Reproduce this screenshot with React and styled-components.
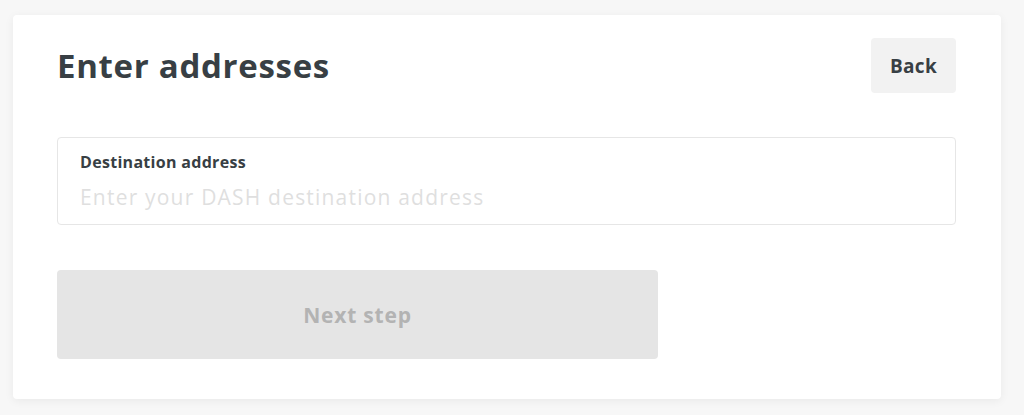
import React from "react";
import styled, { createGlobalStyle } from "styled-components";

const GlobalStyle = createGlobalStyle`
  html, body {
    margin: 0;
    padding: 0;
    background: #f7f7f7;
    font-family: "Open Sans", "Liberation Sans", sans-serif;
  }
`;

const Page = styled.div`
  padding: 15px 23px 16px 13px;
`;

const Card = styled.section`
  background: #fff;
  border-radius: 4px;
  box-shadow: 0 2px 10px rgba(0, 0, 0, 0.06);
  padding: 23px 45px 40px 44px;
`;

const Header = styled.div`
  display: flex;
  align-items: center;
  justify-content: space-between;
`;

const Title = styled.h2`
  margin: 0;
  font-size: 33px;
  font-weight: 700;
  letter-spacing: 0.7px;
  color: #383f44;
`;

const BackButton = styled.button`
  width: 85px;
  height: 55px;
  border: none;
  border-radius: 4px;
  background: #f2f2f2;
  color: #383f44;
  font-family: inherit;
  font-size: 19px;
  font-weight: 700;
  letter-spacing: 0.3px;
`;

const Field = styled.label`
  display: flex;
  flex-direction: column;
  margin-top: 44px;
  height: 88px;
  box-sizing: border-box;
  border: 1px solid #e6e6e6;
  border-radius: 4px;
  padding: 13px 22px 0;
`;

const Label = styled.span`
  font-size: 16px;
  font-weight: 700;
  letter-spacing: 0.3px;
  color: #383f44;
`;

const Input = styled.input`
  margin-top: 10px;
  border: none;
  outline: none;
  padding: 0;
  font-family: inherit;
  font-size: 21px;
  letter-spacing: 1.2px;
  color: #383f44;
  &::placeholder {
    color: #dfdfdf;
  }
`;

const NextButton = styled.button`
  display: block;
  margin-top: 45px;
  width: 601px;
  height: 89px;
  border: none;
  border-radius: 4px;
  background: #e5e5e5;
  color: #b3b3b3;
  font-family: inherit;
  font-size: 21px;
  font-weight: 700;
  letter-spacing: 0.8px;
`;

export default function App() {
  return (
    <Page>
      <GlobalStyle />
      <Card>
        <Header>
          <Title>Enter addresses</Title>
          <BackButton>Back</BackButton>
        </Header>
        <Field>
          <Label>Destination address</Label>
          <Input placeholder="Enter your DASH destination address" />
        </Field>
        <NextButton disabled>Next step</NextButton>
      </Card>
    </Page>
  );
}
